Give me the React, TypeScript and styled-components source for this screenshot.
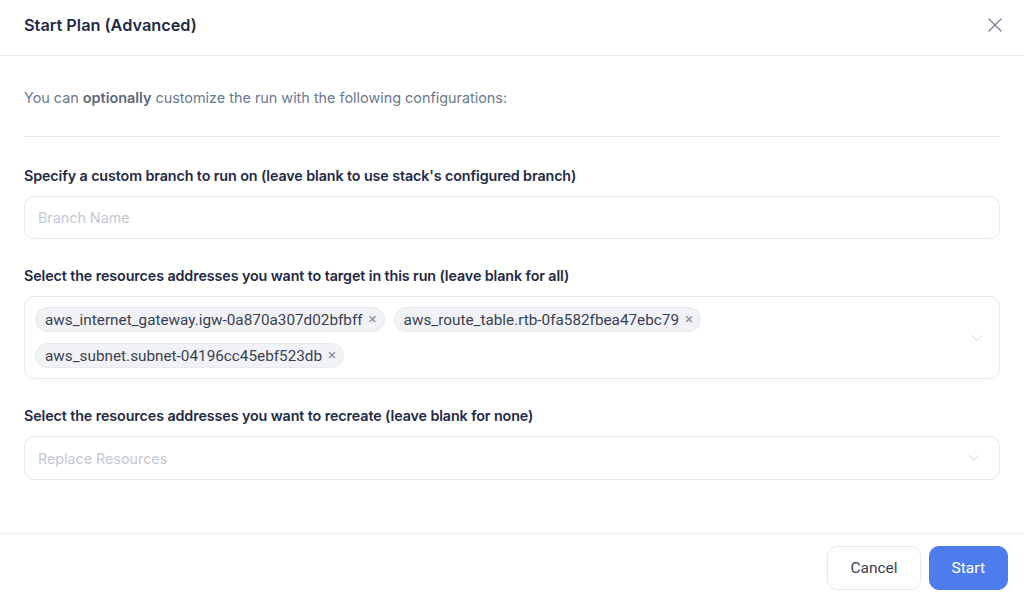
import styled, { createGlobalStyle } from "styled-components";
import { X, ChevronDown } from "lucide-react";

const targets = [
  "aws_internet_gateway.igw-0a870a307d02bfbff",
  "aws_route_table.rtb-0fa582fbea47ebc79",
  "aws_subnet.subnet-04196cc45ebf523db",
];

const App = () => {
  return (
    <Modal>
      <GlobalStyle />
      <Header>
        <Title>Start Plan (Advanced)</Title>
        <Close aria-label="close">
          <X size={24} strokeWidth={1.4} />
        </Close>
      </Header>
      <Body>
        <Intro>
          You can <b>optionally</b> customize the run with the following
          configurations:
        </Intro>
        <Divider />
        <Field>
          <Label>
            Specify a custom branch to run on (leave blank to use stack's
            configured branch)
          </Label>
          <TextInput placeholder="Branch Name" />
        </Field>
        <Field>
          <Label>
            Select the resources addresses you want to target in this run
            (leave blank for all)
          </Label>
          <Select $tall>
            <Tags>
              {targets.map((t) => (
                <Tag key={t}>
                  {t}
                  <TagX>×</TagX>
                </Tag>
              ))}
            </Tags>
            <Chevron>
              <ChevronDown size={20} strokeWidth={1.2} />
            </Chevron>
          </Select>
        </Field>
        <Field>
          <Label>
            Select the resources addresses you want to recreate (leave blank
            for none)
          </Label>
          <Select>
            <Placeholder>Replace Resources</Placeholder>
            <Chevron>
              <ChevronDown size={20} strokeWidth={1.2} />
            </Chevron>
          </Select>
        </Field>
      </Body>
      <Footer>
        <Button>Cancel</Button>
        <Button $primary>Start</Button>
      </Footer>
    </Modal>
  );
};

export default App;

const GlobalStyle = createGlobalStyle`
  body {
    margin: 0;
    background: #ffffff;
    font-family: Roboto, "Liberation Sans", sans-serif;
  }
  * { box-sizing: border-box; }
`;

const Modal = styled.div`
  width: 1024px;
  height: 597px;
  display: flex;
  flex-direction: column;
  background: white;
`;

const Header = styled.div`
  height: 56px;
  display: flex;
  align-items: center;
  justify-content: space-between;
  padding: 0 17px 0 24px;
  border-bottom: 1px solid #e9ecf1;
`;

const Title = styled.div`
  font-family: Inter, sans-serif;
  font-size: 16.3px;
  font-weight: 600;
  color: #1f2a44;
  margin-top: -6px;
`;

const Close = styled.button`
  border: none;
  background: none;
  padding: 0;
  color: #7a8499;
  display: flex;
  margin-top: -6px;
`;

const Body = styled.div`
  flex: 1;
  padding: 32px 24px 0;
`;

const Intro = styled.p`
  margin: 0;
  font-family: Inter, sans-serif;
  font-size: 14.4px;
  color: #6b7890;
  line-height: 20px;

  b {
    font-weight: 600;
    color: #5b6678;
  }
`;

const Divider = styled.div`
  height: 1px;
  background: #e6e9ee;
  margin: 28px 0 29px;
`;

const Field = styled.div`
  display: flex;
  flex-direction: column;
  gap: 10px;
  margin-bottom: 27px;
`;

const Label = styled.div`
  font-family: Inter, sans-serif;
  font-size: 14.3px;
  font-weight: 600;
  color: #1f2a44;
  line-height: 20px;
  letter-spacing: -0.1px;
`;

const TextInput = styled.input`
  height: 43px;
  width: 100%;
  border: 1px solid #e6e9ee;
  border-radius: 10px;
  padding: 0 13px;
  font-family: Inter, sans-serif;
  font-size: 14.3px;
  outline: none;

  &::placeholder {
    color: #c3c8d1;
  }
`;

const Select = styled.div<{ $tall?: boolean }>`
  min-height: 44px;
  border: 1px solid #e6e9ee;
  border-radius: 10px;
  display: flex;
  align-items: center;
  padding: ${(p) => (p.$tall ? "10px 10px 10px" : "0 13px")};
`;

const Tags = styled.div`
  flex: 1;
  display: flex;
  flex-wrap: wrap;
  gap: 11px 9px;
  padding-right: 30px;
`;

const Tag = styled.span`
  height: 25px;
  display: inline-flex;
  align-items: center;
  gap: 6px;
  padding: 0 7px 0 9px;
  border: 1px solid #e7e9ed;
  background: #f1f2f5;
  border-radius: 13px;
  font-family: Roboto, sans-serif;
  font-size: 15.3px;
  color: #3b4150;
`;

const TagX = styled.span`
  color: #8a909b;
  font-size: 15px;
  line-height: 1;
`;

const Placeholder = styled.span`
  flex: 1;
  font-family: Inter, sans-serif;
  font-size: 14.3px;
  color: #c3c8d1;
`;

const Chevron = styled.span`
  display: flex;
  color: #cdd1d8;
  margin-left: auto;
  padding-right: 2px;
`;

const Footer = styled.div`
  height: 64px;
  border-top: 1px solid #e9ecf1;
  display: flex;
  align-items: flex-start;
  justify-content: flex-end;
  gap: 8px;
  padding: 12px 16px 0;
`;

const Button = styled.button<{ $primary?: boolean }>`
  height: 44px;
  padding: 0 22px;
  border-radius: 10px;
  border: 1px solid ${(p) => (p.$primary ? "#4f7cec" : "#e4e7ec")};
  background: ${(p) => (p.$primary ? "#4f7cec" : "white")};
  color: ${(p) => (p.$primary ? "white" : "#3b4150")};
  font-family: Roboto, sans-serif;
  font-size: 15.5px;
`;
